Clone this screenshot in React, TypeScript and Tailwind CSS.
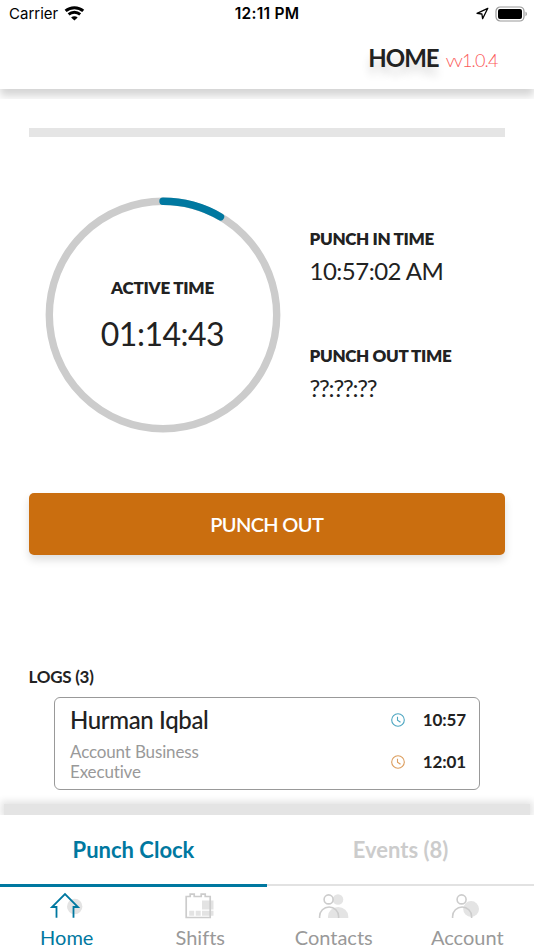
import React from "react";

function StatusBar() {
  return (
    <div className="grid h-[27px] grid-cols-3 items-center font-['Inter','Liberation_Sans',sans-serif] text-[15px] leading-[27px] text-black">
      <div className="flex items-center pl-[9px]">
        <span className="w-[50px] whitespace-nowrap">Carrier</span>
        <svg className="ml-[5px]" width="21" height="16" viewBox="0 0 21 16" fill="none" stroke="#000" strokeWidth="3">
          <path d="M1.600 4.800C6.500.6 14.300.6 19.200 4.800" />
          <path d="M4.600 8.400c3.300-2.900 8.300-2.900 11.600 0" strokeWidth="2.800" />
          <path d="M10.400 14.600 7.100 11.400c1.900-1.700 4.700-1.700 6.600 0z" fill="#000" stroke="none" />
        </svg>
      </div>
      <div className="text-center text-[15.5px] font-semibold tracking-[0.25px]">12:11 PM</div>
      <div className="flex items-center justify-end pr-[6px]">
        <svg width="13" height="13" viewBox="0 0 13 13" fill="none" stroke="#000" strokeWidth="1.3" strokeLinejoin="round">
          <path d="M11.800 1.300 1 6.300l4.900.7.7 4.700z" />
        </svg>
        <svg className="ml-[6px]" width="33" height="16" viewBox="0 0 33 16">
          <rect x="1" y="1" width="28" height="14" rx="4.200" fill="none" stroke="#999" strokeWidth="1.200" />
          <rect x="3" y="3" width="24" height="10" rx="2" fill="#000" />
          <path d="M30.500 5.800c1.800.5 1.800 3.900 0 4.400z" fill="#999" />
        </svg>
      </div>
    </div>
  );
}

function Header() {
  return (
    <header className="h-[89px] shrink-0 bg-white">
      <StatusBar />
      <div className="flex h-[62px] items-baseline justify-end pr-[36.5px] leading-[62px]">
        <h1 className="text-[24px] font-bold tracking-[-1px] [text-shadow:0_8px_8px_rgba(0,0,0,0.14)]">HOME</h1>
        <span className="ml-[7px] text-[18px] font-light tracking-[-0.85px] text-[#fb5a5a]">vv1.0.4</span>
      </div>
    </header>
  );
}

function ActiveTimer() {
  return (
    <div className="grid h-[236px] w-[236px] place-items-center">
      <svg className="col-start-1 row-start-1" width="236" height="236" viewBox="0 0 236 236" fill="none">
        <circle cx="118" cy="118" r="113.7" stroke="#ccc" strokeWidth="7.4" />
        <path d="M118 4.3A113.7 113.7 0 0 1 175.500 19.900" stroke="#0078a0" strokeWidth="7.400" strokeLinecap="round" />
      </svg>
      <div className="col-start-1 row-start-1 flex flex-col items-center">
        <span className="text-[17px] leading-[24px] font-extrabold tracking-[-0.22px]">ACTIVE TIME</span>
        <span className="mt-[14px] text-[32px] leading-[40px] tracking-[-0.5px]">01:14:43</span>
      </div>
    </div>
  );
}

function PunchTime({ label, value, pending = false }: { label: string; value: string; pending?: boolean }) {
  return (
    <div className="flex flex-col">
      <span className="text-[17px] leading-[24px] font-extrabold tracking-[-0.33px]">{label}</span>
      <span className={"mt-[4px] text-[24px] leading-[31px] " + (pending ? "tracking-[-1.2px]" : "tracking-[-0.5px]")}>
        {value}
      </span>
    </div>
  );
}

function LogTime({ time, color }: { time: string; color: string }) {
  return (
    <div className="flex h-[42px] items-center justify-between">
      <svg width="14" height="14" viewBox="0 0 14 14" fill="none" stroke={color} strokeWidth="1.1">
        <circle cx="7" cy="7" r="6.3" />
        <path d="M6.500 3.800v3.300l3 2.200" />
      </svg>
      <span className="text-[17px] leading-[24px] font-bold tracking-[-0.1px]">{time}</span>
    </div>
  );
}

function HomeIcon() {
  return (
    <svg width="44" height="28" viewBox="0 0 44 28" fill="none">
      <circle cx="29.700" cy="14.500" r="7.700" fill="#e3e3e3" />
      <path d="M11.500 25.800V15H7L20 2l13 13h-4.500v10.800" stroke="#0078a0" strokeWidth="1.800" />
    </svg>
  );
}

function ShiftsIcon() {
  return (
    <svg width="44" height="28" viewBox="0 0 44 28" fill="none">
      <path d="M24 8.500h11.500v9H24zM11.200 18.800h5v5h-5zM17.700 18.800h5v5h-5zM24 18.800h11.500v5H24z" fill="#e3e3e3" />
      <path d="M8.200 4.500h4V2.200h4v2.300h7V2.200h4v2.300h5v21h-24z" stroke="#ccc" strokeWidth="1.700" />
    </svg>
  );
}

function ContactsIcon() {
  return (
    <svg width="44" height="28" viewBox="0 0 44 28" fill="none">
      <circle cx="26" cy="7.500" r="5.300" fill="#e4e4e4" />
      <path d="M16 26v-1.500a10.150 9.500 0 0 1 20.300 0V26z" fill="#e4e4e4" />
      <circle cx="16.600" cy="7.400" r="4.500" stroke="#ccc" strokeWidth="1.600" />
      <path d="M7.600 26v-1.500a9.500 9.500 0 0 1 19 0V26" stroke="#ccc" strokeWidth="1.600" />
    </svg>
  );
}

function AccountIcon() {
  return (
    <svg width="44" height="28" viewBox="0 0 44 28" fill="none">
      <circle cx="26.100" cy="17" r="7.900" fill="#e4e4e4" />
      <circle cx="16.600" cy="7.400" r="4.500" stroke="#ccc" strokeWidth="1.600" />
      <path d="M7.600 26v-1.500a9.500 9.500 0 0 1 19 0V26" stroke="#ccc" strokeWidth="1.600" />
    </svg>
  );
}

const navItems = [
  { label: "Home", icon: <HomeIcon />, color: "text-[#0078a0]" },
  { label: "Shifts", icon: <ShiftsIcon />, color: "text-[#999]" },
  { label: "Contacts", icon: <ContactsIcon />, color: "text-[#999]" },
  { label: "Account", icon: <AccountIcon />, color: "text-[#999]" },
];

export default function App() {
  return (
    <div className="flex h-[950px] w-[534px] flex-col overflow-hidden bg-white font-['Lato',sans-serif] text-[#222] [font-variant-ligatures:none]">
      <Header />
      <div className="h-[10px] shrink-0 overflow-hidden">
        <div className="-mt-[20px] h-[20px] shadow-[0_7px_9px_rgba(0,0,0,0.17)]" />
      </div>

      <main className="flex h-[696px] shrink-0 flex-col px-[28.500px] pt-[29px]">
        <div className="ml-[0.3px] h-[9px] w-[476.4px] shrink-0 bg-[#e5e5e5]" />
        <section className="mt-[60px] flex h-[236px] shrink-0 pl-[16px]">
          <ActiveTimer />
          <div className="ml-[29px] flex flex-col gap-[58px] pt-[30px]">
            <PunchTime label="PUNCH IN TIME" value="10:57:02 AM" />
            <PunchTime label="PUNCH OUT TIME" value="??:??:??" pending />
          </div>
        </section>
        <button className="mt-[60px] h-[62px] w-[476.5px] shrink-0 rounded-[5px] bg-[#ca6e0f] text-[20px] font-semibold tracking-[-0.65px] text-white shadow-[0_5px_8px_rgba(0,0,0,0.13)]">
          PUNCH OUT
        </button>
        <h2 className="mt-[110px] text-[17px] leading-[24px] font-bold tracking-[-0.25px]">LOGS (3)</h2>
        <article className="mt-[8px] ml-[25px] flex h-[93px] w-[426.5px] shrink-0 justify-between rounded-[6px] border-[1.5px] border-[#999] pr-[13px] pl-[15.5px]">
          <div className="w-[150px] pt-[7px]">
            <h3 className="text-[24px] leading-[30px] font-medium tracking-[-0.37px] whitespace-nowrap">Hurman Iqbal</h3>
            <p className="mt-[6.5px] text-[17px] leading-[20px] tracking-[-0.15px] text-[#999]">Account Business Executive</p>
          </div>
          <div className="w-[75px] pt-[0.5px]">
            <LogTime time="10:57" color="#4da6c1" />
            <LogTime time="12:01" color="#dc9d5d" />
          </div>
        </article>
      </main>

      <div className="flex h-[20px] shrink-0 items-end overflow-hidden px-[4px]">
        <div className="h-[11px] w-full bg-[#e4e4e4] shadow-[0_0_7px_3px_#e4e4e4]" />
      </div>

      <div className="grid h-[72px] shrink-0 grid-cols-2 items-start bg-white text-center text-[22px] leading-[69px] font-bold">
        <div className="border-b-[3px] border-[#0078a0] text-[#0078a0]">Punch Clock</div>
        <div className="border-b-2 border-[#e2e2e2] text-[#ccc]">Events (8)</div>
      </div>

      <nav className="grid h-[63px] shrink-0 grid-cols-4">
        {navItems.map((item) => (
          <div key={item.label} className={"flex flex-col items-center pt-[5px] " + item.color}>
            {item.icon}
            <span className="mt-[4px] text-[20px] leading-[26px]">{item.label}</span>
          </div>
        ))}
      </nav>
    </div>
  );
}
